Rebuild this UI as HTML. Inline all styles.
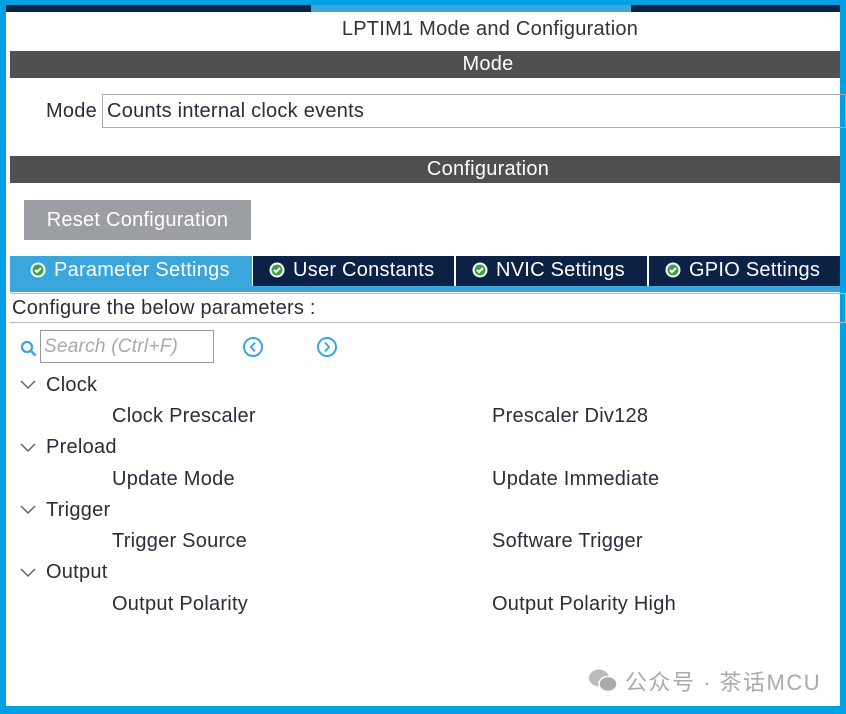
<!DOCTYPE html>
<html><head><meta charset="utf-8"><style>
*{margin:0;padding:0;box-sizing:border-box}
body{width:846px;height:714px;background:#00a0e4;position:relative;overflow:hidden;font-family:"Liberation Sans",sans-serif;color:#333;letter-spacing:.25px}
.abs{position:absolute}
.inner{left:6px;top:12px;width:834px;height:694px;background:#fff}
.topstrip{left:6px;top:5px;width:834px;height:8px;background:#0b2244}
.topstrip .lt{position:absolute;left:305px;width:320px;top:0;height:8px;background:#3aa6dc}
.title{left:140px;top:14px;width:700px;text-align:center;font-size:20px;line-height:30px;color:#333}
.bar{left:10px;width:830px;height:27px;background:#4f504f}
.bt{color:#fff;text-align:center;font-size:20px;line-height:27px;left:190px;width:596px}
.t{font-size:20px;color:#2c2c3a;white-space:nowrap}
.tab{top:256px;height:30px;background:#0c2146;color:#fff;font-size:20px;line-height:29px;white-space:nowrap}
.tab svg{vertical-align:-2px;margin-right:8px}
</style></head><body>
<div class="abs topstrip"><div class="lt"></div></div>
<div class="abs inner"></div>
<div class="abs title">LPTIM1 Mode and Configuration</div>
<div class="abs bar" style="top:51px"></div><div class="abs bt" style="top:51px">Mode</div>
<div class="abs t" style="left:46px;top:100px">Mode</div>
<div class="abs t" style="left:102px;top:94px;width:744px;height:34px;border:1px solid #aaa;padding:5px 0 0 4px">Counts internal clock events</div>
<div class="abs bar" style="top:156px"></div><div class="abs bt" style="top:156px">Configuration</div>
<div class="abs" style="left:24px;top:200px;width:227px;height:40px;background:#9b9fa3;color:#fff;font-size:20px;line-height:40px;text-align:center">Reset Configuration</div>
<div class="abs" style="left:10px;top:286px;width:830px;height:6px;background:#3aa6dc"></div>
<div class="abs tab" style="left:10px;background:#3aa6dc;width:242px;padding-left:20px"><svg width="16" height="16"><circle cx="8" cy="8" r="7.5" fill="#fff"/><circle cx="8" cy="8" r="5.5" fill="#3ca14a"/><path d="M5 8l2 2 4-4" stroke="#fff" stroke-width="2" fill="none"/></svg>Parameter Settings</div>
<div class="abs tab" style="left:253px;width:201px;padding-left:16px"><svg width="16" height="16"><circle cx="8" cy="8" r="7.5" fill="#fff"/><circle cx="8" cy="8" r="5.5" fill="#3ca14a"/><path d="M5 8l2 2 4-4" stroke="#fff" stroke-width="2" fill="none"/></svg>User Constants</div>
<div class="abs tab" style="left:456px;width:191px;padding-left:16px"><svg width="16" height="16"><circle cx="8" cy="8" r="7.5" fill="#fff"/><circle cx="8" cy="8" r="5.5" fill="#3ca14a"/><path d="M5 8l2 2 4-4" stroke="#fff" stroke-width="2" fill="none"/></svg>NVIC Settings</div>
<div class="abs tab" style="left:649px;width:191px;padding-left:16px"><svg width="16" height="16"><circle cx="8" cy="8" r="7.5" fill="#fff"/><circle cx="8" cy="8" r="5.5" fill="#3ca14a"/><path d="M5 8l2 2 4-4" stroke="#fff" stroke-width="2" fill="none"/></svg>GPIO Settings</div>
<div class="abs t" style="left:10px;top:293px;width:836px;height:30px;border:1px solid #bbb;border-left:none;padding:3px 0 0 2px">Configure the below parameters :</div>
<svg class="abs" style="left:19px;top:339px" width="20" height="20"><circle cx="8" cy="8" r="5" stroke="#3aa6dc" stroke-width="2.2" fill="none"/><path d="M11.5 11.5l5 5" stroke="#3aa6dc" stroke-width="2.5"/></svg>
<div class="abs" style="left:40px;top:330px;width:174px;height:33px;border:1px solid #999;font-style:italic;color:#aaa;font-size:19px;padding:5px 0 0 3px;white-space:nowrap">Search (Ctrl+F)</div>
<svg class="abs" style="left:242px;top:336px" width="22" height="22"><circle cx="11" cy="11" r="9" stroke="#3aa6dc" stroke-width="2" fill="none"/><path d="M13 6.5l-4 4.5 4 4.5" stroke="#3aa6dc" stroke-width="2" fill="none"/></svg>
<svg class="abs" style="left:316px;top:336px" width="22" height="22"><circle cx="11" cy="11" r="9" stroke="#3aa6dc" stroke-width="2" fill="none"/><path d="M9 6.5l4 4.5-4 4.5" stroke="#3aa6dc" stroke-width="2" fill="none"/></svg>
<svg class="abs" style="left:20px;top:380px" width="16" height="10"><path d="M1 1l7 7 7-7" stroke="#666" stroke-width="1.5" fill="none"/></svg>
<div class="abs t" style="left:46px;top:374px">Clock</div>
<div class="abs t" style="left:112px;top:405px">Clock Prescaler</div>
<div class="abs t" style="left:492px;top:405px">Prescaler Div128</div>
<svg class="abs" style="left:20px;top:443px" width="16" height="10"><path d="M1 1l7 7 7-7" stroke="#666" stroke-width="1.5" fill="none"/></svg>
<div class="abs t" style="left:46px;top:436px">Preload</div>
<div class="abs t" style="left:112px;top:468px">Update Mode</div>
<div class="abs t" style="left:492px;top:468px">Update Immediate</div>
<svg class="abs" style="left:20px;top:505px" width="16" height="10"><path d="M1 1l7 7 7-7" stroke="#666" stroke-width="1.5" fill="none"/></svg>
<div class="abs t" style="left:46px;top:499px">Trigger</div>
<div class="abs t" style="left:112px;top:530px">Trigger Source</div>
<div class="abs t" style="left:492px;top:530px">Software Trigger</div>
<svg class="abs" style="left:20px;top:568px" width="16" height="10"><path d="M1 1l7 7 7-7" stroke="#666" stroke-width="1.5" fill="none"/></svg>
<div class="abs t" style="left:46px;top:561px">Output</div>
<div class="abs t" style="left:112px;top:593px">Output Polarity</div>
<div class="abs t" style="left:492px;top:593px">Output Polarity High</div>
<svg class="abs" style="left:588px;top:668px" width="32" height="26"><ellipse cx="11" cy="10" rx="10" ry="8.5" fill="#bbb"/><ellipse cx="20" cy="16" rx="9" ry="7.5" fill="#aaa" stroke="#fff" stroke-width="1.5"/></svg>
<div class="abs" style="left:625px;top:665px;font-size:22px;letter-spacing:1.5px;color:#aaa;font-family:'Liberation Sans','Noto Sans CJK SC',sans-serif;white-space:nowrap">公众号 · 茶话MCU</div>
</body></html>
